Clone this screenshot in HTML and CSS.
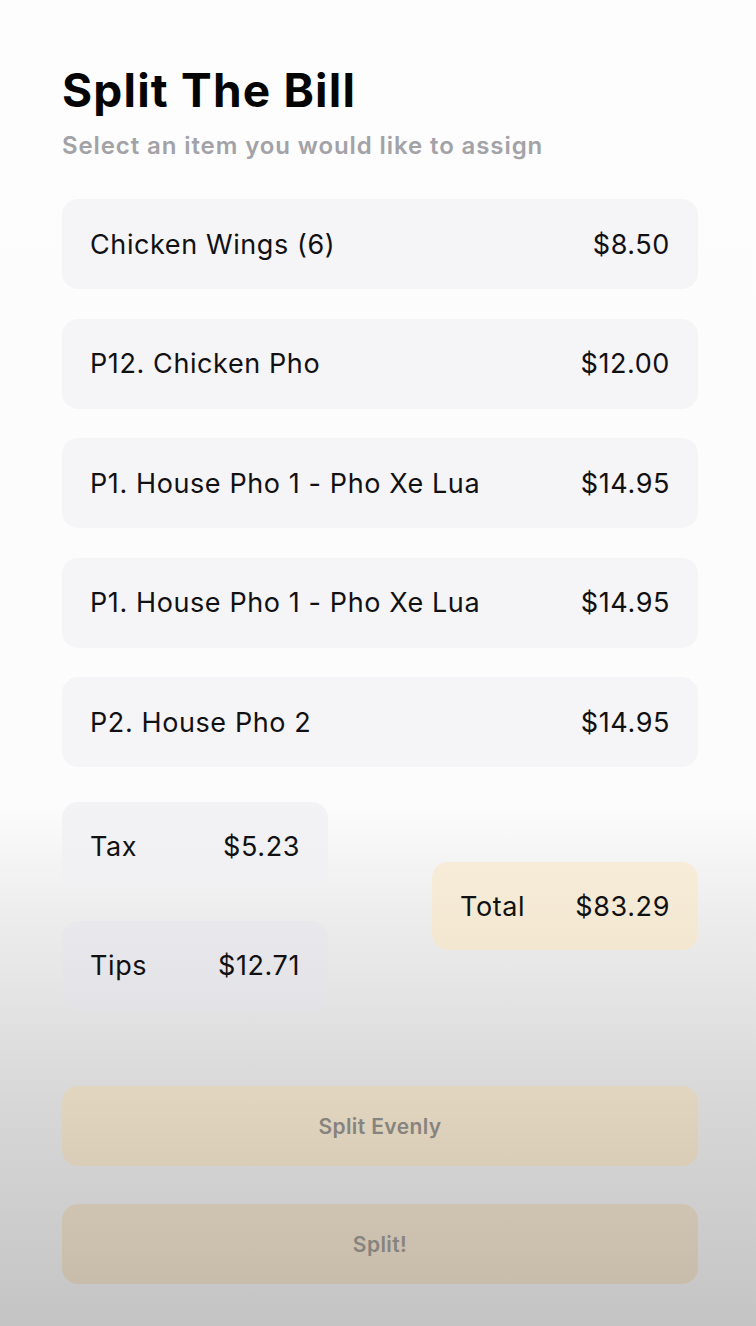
FILE: index.html
```html
<!DOCTYPE html>
<html>
<head>
<meta charset="utf-8">
<link rel="stylesheet" href="styles.css">
</head>
<body>
<main class="screen">
  <h1 class="title">Split The Bill</h1>
  <p class="subtitle">Select an item you would like to assign</p>
  <ul class="items">
    <li class="card item"><span>Chicken Wings (6)</span><span>$8.50</span></li>
    <li class="card item"><span>P12. Chicken Pho</span><span>$12.00</span></li>
    <li class="card item"><span>P1. House Pho 1 - Pho Xe Lua</span><span>$14.95</span></li>
    <li class="card item"><span>P1. House Pho 1 - Pho Xe Lua</span><span>$14.95</span></li>
    <li class="card item"><span>P2. House Pho 2</span><span>$14.95</span></li>
  </ul>
  <section class="summary">
    <div class="extras">
      <div class="card small tax"><span>Tax</span><span>$5.23</span></div>
      <div class="card small tips"><span>Tips</span><span>$12.71</span></div>
    </div>
    <div class="card small total"><span>Total</span><span>$83.29</span></div>
  </section>
  <div class="actions">
    <button class="btn btn-even">Split Evenly</button>
    <button class="btn btn-split">Split!</button>
  </div>
</main>
</body>
</html>
```

FILE: styles.css
```css
* { box-sizing: border-box; }
html, body { margin: 0; padding: 0; }
body {
  width: 756px;
  height: 1326px;
  overflow: hidden;
  font-family: Inter, "Liberation Sans", sans-serif;
  color: #111113;
  background: linear-gradient(to bottom, #fdfdfd 0px, #fcfcfc 805px, #eeeeee 905px, #e3e3e3 1005px, #d7d7d7 1105px, #c4c4c4 1326px);
}
.screen {
  padding: 64px 58px 0 62px;
  display: flex;
  flex-direction: column;
}
.title {
  margin: 0;
  font-size: 46px;
  line-height: 52px;
  font-weight: 700;
  letter-spacing: 1.2px;
  color: #050505;
}
.subtitle {
  margin: 15px 0 0;
  font-size: 24px;
  line-height: 30px;
  font-weight: 600;
  color: #a2a2a7;
  letter-spacing: 0.9px;
}
.items {
  list-style: none;
  margin: 38px 0 0;
  padding: 0;
  display: flex;
  flex-direction: column;
  gap: 29.5px;
}
.card {
  display: flex;
  align-items: center;
  justify-content: space-between;
  border-radius: 16px;
  font-size: 27px;
  letter-spacing: 0.6px;
}
.item {
  height: 90px;
  padding: 0 28px;
  background: #f5f4f7;
}
.summary {
  margin-top: 35px;
  display: flex;
  justify-content: space-between;
  align-items: center;
}
.extras {
  display: flex;
  flex-direction: column;
  gap: 31px;
}
.small {
  width: 266px;
  height: 88px;
  padding: 0 28px;
}
.tax { background: linear-gradient(#f3f3f5, #f0f0f2); }
.tips { height: 89px; background: linear-gradient(#e9e8ec, #e3e2e6); }
.total { background: linear-gradient(#f6ecd8, #f3e7d1); }
.actions {
  margin-top: 76px;
  display: flex;
  flex-direction: column;
  gap: 38px;
}
.btn {
  height: 80px;
  border: none;
  border-radius: 16px;
  font-family: Inter, "Liberation Sans", sans-serif;
  font-size: 21px;
  font-weight: 600;
  letter-spacing: 0.4px;
  color: #87837e;
}
.btn-even { background: linear-gradient(#e2d6c1, #d9cdb8); }
.btn-split { background: linear-gradient(#cfc4b1, #c8bdab); }
```
